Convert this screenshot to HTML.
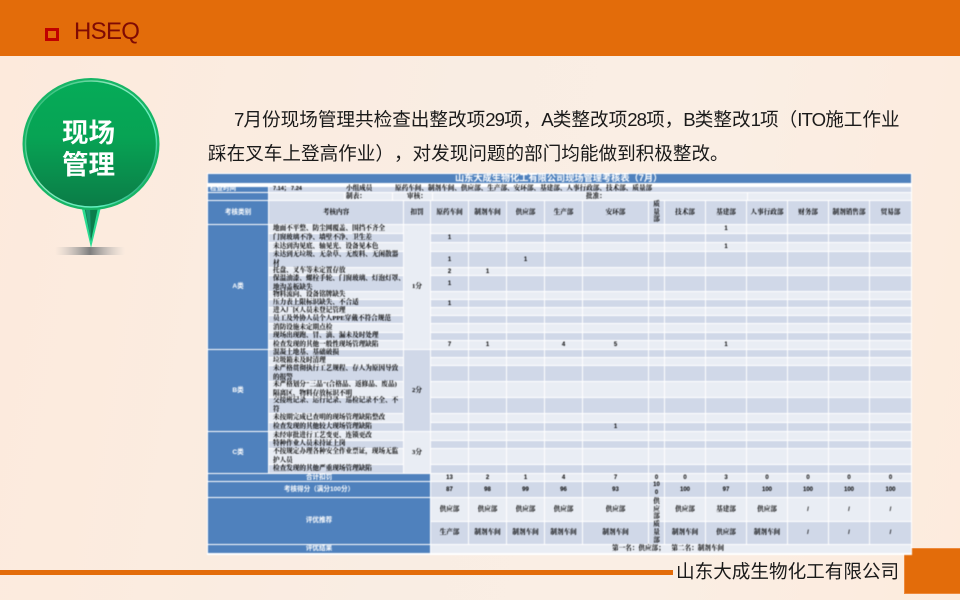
<!DOCTYPE html>
<html lang="zh"><head><meta charset="utf-8"><title>HSEQ</title>
<style>
html,body{margin:0;padding:0}
body{width:960px;height:600px;overflow:hidden;position:relative;background:linear-gradient(100deg,#fdeadc 0%,#f9ede3 45%,#faeee4 70%,#fdebdd 100%);font-family:"Liberation Sans","Noto Sans CJK SC",sans-serif;text-spacing-trim:space-all}
.abs{position:absolute;white-space:nowrap}
#top{left:0;top:0;width:960px;height:56px;background:#e36c0a}
#sq{left:45px;top:28px;width:8px;height:7px;border:3px solid #c00000;background:#e36c0a}
#hs{left:74px;top:17px;font-size:24px;letter-spacing:-.7px;line-height:30px;color:#7f0a04}
.body{font-size:18.6px;line-height:26px;color:#1a1a1a;font-family:"Liberation Sans","Noto Sans CJK SC",sans-serif}
.body u{text-decoration:none;letter-spacing:-.9px}
#wrap{left:207px;top:173px;width:705px;height:382px;background:#fff;filter:blur(.4px);font-family:"Liberation Serif","Noto Serif CJK SC",serif;font-size:6.6px;color:#000;font-weight:700;white-space:normal}
#wrap .abs{line-height:8px}
.bar{position:absolute;display:block}
#g{position:absolute;left:1px;top:28px;display:grid;gap:1px;
grid-template-columns:60px 134px 26px 37px 37px 37px 37px 65px 15px 40px 40px 40px 40px 40px 41px;
grid-template-rows:23px 8px 8px 8px 15px 7px 15px 7px 7px 7px 7px 8px 7px 8px 7px 7px 15px 15px 15px 8px 8px 8px 7px 15px 8px 7px 15px 23px 22px 8px}
#g p{margin:0;display:flex;align-items:center;justify-content:center;text-align:center;line-height:8px;min-width:0}
.r{display:contents}
.l>p{background:#e9edf4}
.d>p{background:#d0d8e8}
#g p.t{justify-content:flex-start;text-align:left;padding-left:4px;line-height:8.6px;white-space:nowrap}
#g p.b{background:#4f81bd;color:#fff;font-family:"Liberation Sans","Noto Sans CJK SC",sans-serif}
#g p.k{background:#e9edf4}
#g p.k2{background:#d0d8e8}
#g p.v{line-height:7.8px}
#g .n{font-family:"Liberation Sans",sans-serif;font-size:6px}
#line{left:0;top:570px;width:673px;height:5px;background:#e36c0a}
#co{left:676px;top:559px;font-size:18.6px;line-height:26px;color:#1a1a1a}
#box{left:904px;top:548px;width:55px;height:44px;background:#e36c0a;border:1px solid #ee8a3c;box-sizing:content-box}
</style></head>
<body>
<div class="abs" id="top"></div>
<div class="abs" id="sq"></div>
<div class="abs" id="hs">HSEQ</div>

<svg class="abs" style="left:0;top:70px" width="180" height="195" viewBox="0 70 180 195">
<defs>
<linearGradient id="gr" x1="0" y1="0" x2="0" y2="1"><stop offset="0" stop-color="#05ab58"/><stop offset=".45" stop-color="#07a354"/><stop offset="1" stop-color="#0b7c47"/></linearGradient>
<linearGradient id="sh" x1="0" y1="0" x2="1" y2="0"><stop offset="0" stop-color="#bbb" stop-opacity="0"/><stop offset=".5" stop-color="#7d7d7d"/><stop offset="1" stop-color="#bbb" stop-opacity="0"/></linearGradient>
<linearGradient id="ri" x1="0" y1="0" x2="1" y2=".7"><stop offset="0" stop-color="#0fae60"/><stop offset=".45" stop-color="#8fe6bc"/><stop offset=".85" stop-color="#5ff0c0"/><stop offset="1" stop-color="#2fae80"/></linearGradient>
</defs>
<rect x="55" y="247" width="70" height="8" rx="2" fill="url(#sh)"/>
<path d="M81.5 207 L91 248 L101 207 Z" fill="#2bdc92"/>
<path d="M84 205 L91 241 L98.5 205 Z" fill="#0b7d4b"/>
<path d="M85 205 L91 241 L90 205 Z" fill="#1a9a72"/>
<ellipse cx="91" cy="144" rx="68.5" ry="66" fill="#17b566"/>
<ellipse cx="91" cy="144" rx="65.5" ry="63" fill="url(#gr)" stroke="url(#ri)" stroke-width="1.4"/>
<text x="88.5" y="142" text-anchor="middle" font-family="'Liberation Sans','Noto Sans CJK SC',sans-serif" font-weight="700" font-size="26.5" fill="#fff">现场</text>
<text x="88.5" y="174" text-anchor="middle" font-family="'Liberation Sans','Noto Sans CJK SC',sans-serif" font-weight="700" font-size="26.5" fill="#fff">管理</text>
</svg>

<div class="abs body" style="left:234px;top:107px"><u>7</u>月份现场管理共检查出整改项<u>29</u>项，<u>A</u>类整改项<u>28</u>项，<u>B</u>类整改<u>1</u>项（<u>ITO</u>施工作业</div>
<div class="abs body" style="left:208px;top:141px">踩在叉车上登高作业），对发现问题的部门均能做到积极整改。</div>

<div class="abs" id="box"></div>
<div class="abs" id="line"></div>
<div class="abs" id="co">山东大成生物化工有限公司</div>

<div class="abs" id="wrap">
<span class="bar" style="left:1px;top:1px;width:703px;height:9px;background:#4f81bd"></span>
<span class="abs" style="left:248px;top:0;line-height:11px;font-family:'Liberation Sans','Noto Sans CJK SC',sans-serif;font-size:9.2px;font-weight:700;color:#fff">山东大成生物化工有限公司现场管理考核表（7月）</span>
<span class="bar" style="left:1px;top:14px;width:60px;height:5px;background:#4f81bd"></span>
<span class="bar" style="left:62px;top:14px;width:642px;height:5px;background:#d0d8e8"></span>
<span class="bar" style="left:1px;top:20px;width:60px;height:7px;background:#4f81bd"></span>
<span class="bar" style="left:62px;top:20px;width:75px;height:7px;background:#e9edf4"></span>
<span class="bar" style="left:138px;top:20px;width:47px;height:7px;background:#e9edf4"></span>
<span class="bar" style="left:186px;top:20px;width:39px;height:7px;background:#e9edf4"></span>
<span class="bar" style="left:226px;top:20px;width:314px;height:7px;background:#e9edf4"></span>
<span class="bar" style="left:541px;top:20px;width:163px;height:7px;background:#e9edf4"></span>
<span class="abs" style="left:3px;top:12px;color:#fff;font-family:'Liberation Sans','Noto Sans CJK SC',sans-serif;font-size:6.5px;line-height:8px">检查时间</span>
<span class="abs" style="left:66px;top:12px;font-family:'Liberation Sans',sans-serif;font-size:5.6px">7.14； 7.24</span>
<span class="abs" style="left:139px;top:12px">小组成员</span>
<span class="abs" style="left:188px;top:12px">原药车间、制剂车间、供应部、生产部、安环部、基建部、人事行政部、技术部、质量部</span>
<span class="abs" style="left:139px;top:20px">制表：</span>
<span class="abs" style="left:200px;top:20px">审核：</span>
<span class="abs" style="left:379px;top:20px">批准：</span>

<div id="g">
<div class="r d"><p class="b">考核类别</p><p>考核内容</p><p>扣罚</p><p>原药车间</p><p>制剂车间</p><p>供应部</p><p>生产部</p><p>安环部</p><p class="v">质<br>量<br>部</p><p>技术部</p><p>基建部</p><p>人事行政部</p><p>财务部</p><p>制剂销售部</p><p>贸易部</p></div>
<p class="b" style="grid-column:1;grid-row:2/15">A类</p>
<p class="k" style="grid-column:3;grid-row:2/15">1分</p>
<p class="b" style="grid-column:1;grid-row:15/22">B类</p>
<p class="k2" style="grid-column:3;grid-row:15/22">2分</p>
<p class="b" style="grid-column:1;grid-row:22/26">C类</p>
<p class="k" style="grid-column:3;grid-row:22/26">3分</p>
<div class="r l"><p class="t">地面不平整、防尘网覆盖、围挡不齐全</p><p></p><p></p><p></p><p></p><p></p><p></p><p></p><p class="n">1</p><p></p><p></p><p></p><p></p></div>
<div class="r d"><p class="t">门窗玻璃不净、墙壁不净、卫生差</p><p class="n">1</p><p></p><p></p><p></p><p></p><p></p><p></p><p></p><p></p><p></p><p></p><p></p></div>
<div class="r l"><p class="t">未达到沟见底、轴见光、设备见本色</p><p></p><p></p><p></p><p></p><p></p><p></p><p></p><p class="n">1</p><p></p><p></p><p></p><p></p></div>
<div class="r d"><p class="t"><span>未达到无垃圾、无杂草、无废料、无闲散器<br>材</span></p><p class="n">1</p><p></p><p class="n">1</p><p></p><p></p><p></p><p></p><p></p><p></p><p></p><p></p><p></p></div>
<div class="r l"><p class="t">托盘、叉车等未定置存放</p><p class="n">2</p><p class="n">1</p><p></p><p></p><p></p><p></p><p></p><p></p><p></p><p></p><p></p><p></p></div>
<div class="r d"><p class="t"><span>保温油漆、螺栓手轮、门窗玻璃、灯泡灯罩、<br>地沟盖板缺失</span></p><p class="n">1</p><p></p><p></p><p></p><p></p><p></p><p></p><p></p><p></p><p></p><p></p><p></p></div>
<div class="r l"><p class="t">物料流向、设备铭牌缺失</p><p></p><p></p><p></p><p></p><p></p><p></p><p></p><p></p><p></p><p></p><p></p><p></p></div>
<div class="r d"><p class="t">压力表上限标识缺失、不合适</p><p class="n">1</p><p></p><p></p><p></p><p></p><p></p><p></p><p></p><p></p><p></p><p></p><p></p></div>
<div class="r l"><p class="t">进入厂区人员未登记管理</p><p></p><p></p><p></p><p></p><p></p><p></p><p></p><p></p><p></p><p></p><p></p><p></p></div>
<div class="r d"><p class="t">员工及外协人员个人PPE穿戴不符合规范</p><p></p><p></p><p></p><p></p><p></p><p></p><p></p><p></p><p></p><p></p><p></p><p></p></div>
<div class="r l"><p class="t">消防设施未定期点检</p><p></p><p></p><p></p><p></p><p></p><p></p><p></p><p></p><p></p><p></p><p></p><p></p></div>
<div class="r d"><p class="t">现场出现跑、冒、滴、漏未及时处理</p><p></p><p></p><p></p><p></p><p></p><p></p><p></p><p></p><p></p><p></p><p></p><p></p></div>
<div class="r l"><p class="t">检查发现的其他一般性现场管理缺陷</p><p class="n">7</p><p class="n">1</p><p></p><p class="n">4</p><p class="n">5</p><p></p><p></p><p class="n">1</p><p></p><p></p><p></p><p></p></div>
<div class="r d"><p class="t">混凝土地基、基础破损</p><p></p><p></p><p></p><p></p><p></p><p></p><p></p><p></p><p></p><p></p><p></p><p></p></div>
<div class="r l"><p class="t">垃圾箱未及时清理</p><p></p><p></p><p></p><p></p><p></p><p></p><p></p><p></p><p></p><p></p><p></p><p></p></div>
<div class="r d"><p class="t"><span>未严格贯彻执行工艺规程、存人为原因导致<br>的报警</span></p><p></p><p></p><p></p><p></p><p></p><p></p><p></p><p></p><p></p><p></p><p></p><p></p></div>
<div class="r l"><p class="t"><span>未严格划分"三品"(合格品、返修品、废品)<br>隔离区、物料存放标识不明</span></p><p></p><p></p><p></p><p></p><p></p><p></p><p></p><p></p><p></p><p></p><p></p><p></p></div>
<div class="r d"><p class="t"><span>交接班记录、运行记录、巡检记录不全、不<br>符</span></p><p></p><p></p><p></p><p></p><p></p><p></p><p></p><p></p><p></p><p></p><p></p><p></p></div>
<div class="r l"><p class="t">未按期完成已查明的现场管理缺陷整改</p><p></p><p></p><p></p><p></p><p></p><p></p><p></p><p></p><p></p><p></p><p></p><p></p></div>
<div class="r d"><p class="t">检查发现的其他较大现场管理缺陷</p><p></p><p></p><p></p><p></p><p class="n">1</p><p></p><p></p><p></p><p></p><p></p><p></p><p></p></div>
<div class="r l"><p class="t">未经审批进行工艺变更、连锁更改</p><p></p><p></p><p></p><p></p><p></p><p></p><p></p><p></p><p></p><p></p><p></p><p></p></div>
<div class="r d"><p class="t">特种作业人员未持证上岗</p><p></p><p></p><p></p><p></p><p></p><p></p><p></p><p></p><p></p><p></p><p></p><p></p></div>
<div class="r l"><p class="t"><span>不按规定办理各种安全作业票证，现场无监<br>护人员</span></p><p></p><p></p><p></p><p></p><p></p><p></p><p></p><p></p><p></p><p></p><p></p><p></p></div>
<div class="r d"><p class="t">检查发现的其他严重现场管理缺陷</p><p></p><p></p><p></p><p></p><p></p><p></p><p></p><p></p><p></p><p></p><p></p><p></p></div>
<div class="r l"><p class="b" style="grid-column:1/4">合计扣罚</p><p class="n">13</p><p class="n">2</p><p class="n">1</p><p class="n">4</p><p class="n">7</p><p class="n">0</p><p class="n">0</p><p class="n">3</p><p class="n">0</p><p class="n">0</p><p class="n">0</p><p class="n">0</p></div>
<div class="r d"><p class="b" style="grid-column:1/4">考核得分（满分100分）</p><p class="n">87</p><p class="n">98</p><p class="n">99</p><p class="n">96</p><p class="n">93</p><p class="n v">10<br>0</p><p class="n">100</p><p class="n">97</p><p class="n">100</p><p class="n">100</p><p class="n">100</p><p class="n">100</p></div>
<p class="b" style="grid-column:1/4;grid-row:28/30">评优推荐</p>
<div class="r l"><p>供应部</p><p>供应部</p><p>供应部</p><p>供应部</p><p>供应部</p><p class="v">供<br>应<br>部</p><p>供应部</p><p>基建部</p><p>供应部</p><p class="n">/</p><p class="n">/</p><p class="n">/</p></div>
<div class="r d"><p>生产部</p><p>制剂车间</p><p>制剂车间</p><p>制剂车间</p><p>制剂车间</p><p class="v">质<br>量<br>部</p><p>制剂车间</p><p>供应部</p><p>制剂车间</p><p class="n">/</p><p class="n">/</p><p class="n">/</p></div>
<div class="r l"><p class="b" style="grid-column:1/4">评优结果</p><p class="t" style="grid-column:4/16;padding-left:181px;white-space:pre">第一名：供应部；    第二名：制剂车间</p></div>
</div>
</div>
</body></html>
